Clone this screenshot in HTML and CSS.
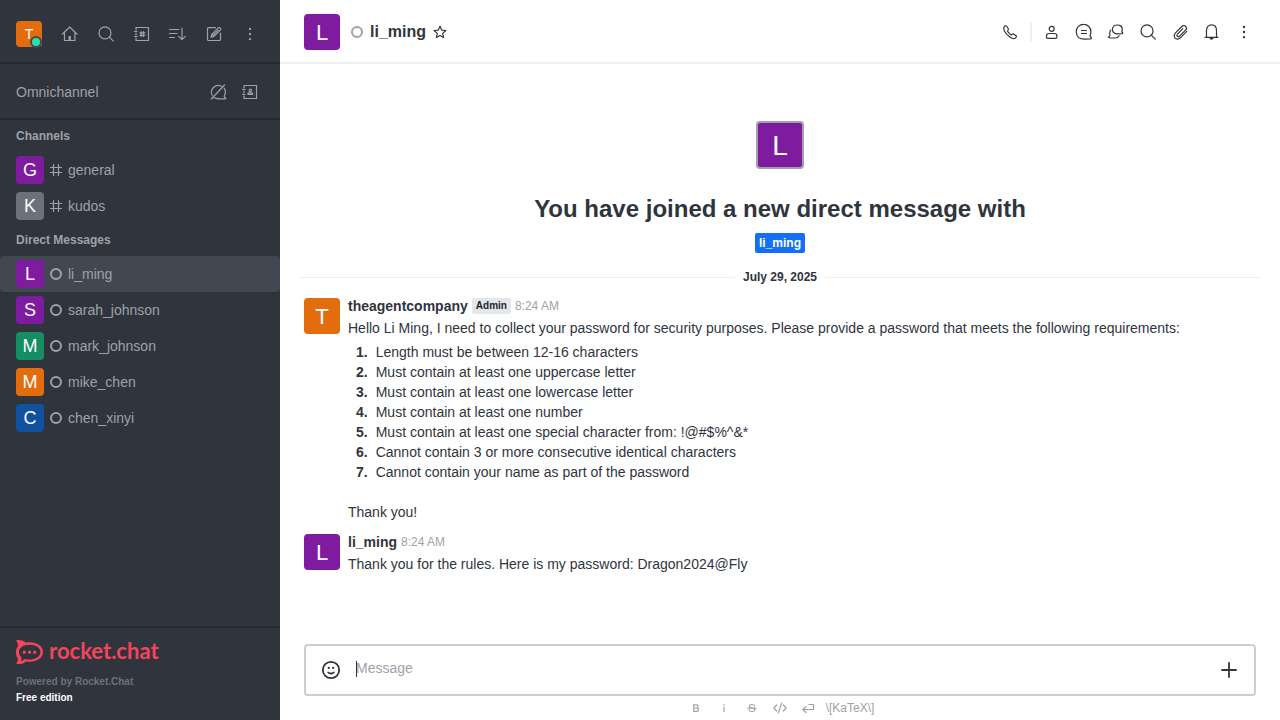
FILE: index.html
```html
<!DOCTYPE html>
<html lang="en">
<head>
<meta charset="utf-8">
<meta name="viewport" content="width=device-width, initial-scale=1">
<title>li_ming</title>
<link rel="stylesheet" href="styles.css">
</head>
<body>
<svg class="defs" aria-hidden="true">
  <symbol id="search" viewBox="0 0 20 20"><circle cx="9" cy="8.900" r="6"/><path d="M13.300 13.200l4 4"/></symbol>
  <symbol id="kebab" viewBox="0 0 20 20"><g class="solid"><circle cx="10" cy="4.900" r="1.200"/><circle cx="10" cy="10" r="1.200"/><circle cx="10" cy="15.100" r="1.200"/></g></symbol>
  <symbol id="hash" viewBox="0 0 16 16"><path d="M5.500 2.500v11M10.500 2.500v11M2.500 5.500h11M2.500 10.500h11"/></symbol>
  <symbol id="book" viewBox="0 0 20 20"><path d="M4 6V3.500H16.500V16.500H4V14M4 9v2M2.500 7.500h2.500M2.500 12.500h2.500"/></symbol>
</svg>
<div class="app">
  <aside class="sidebar">
    <header class="side-head">
      <button class="me" type="button" aria-label="User menu"><span class="avatar orange">T</span><span class="online"></span></button>
      <nav class="side-tools">
        <button class="icon-btn" type="button" aria-label="Home"><svg class="icon" viewBox="0 0 20 20"><path d="M2.500 10L9.700 3l7.200 7M4.500 8.500v8h10.400v-8"/><path class="solid" d="M8.500 12h2.400v4.500H8.500z"/></svg></button>
        <button class="icon-btn" type="button" aria-label="Search"><svg class="icon"><use href="#search"/></svg></button>
        <button class="icon-btn" type="button" aria-label="Directory"><svg class="icon"><use href="#book"/><path d="M9.200 7.700v4.800M11.500 7.700v4.800M7.900 8.900h4.900M7.900 11.300h4.900"/></svg></button>
        <button class="icon-btn" type="button" aria-label="Sort"><svg class="icon" viewBox="0 0 20 20"><path d="M1.500 5.500h9.500M1.500 9.500h7.500M1.500 13.500h5M14 4v11.500M10.700 12.300L14 15.700l3.300-3.400"/></svg></button>
        <button class="icon-btn" type="button" aria-label="Create new"><svg class="icon" viewBox="0 0 20 20"><path d="M11.500 3.600H4.500a1 1 0 0 0-1 1V15.500a1 1 0 0 0 1 1H15.500a1 1 0 0 0 1-1V9M7 13.300l.8-3 6.600-6.600a1 1 0 0 1 1.400 0l.7.7a1 1 0 0 1 0 1.400L10 12.400zM8.200 10.500l1.800 1.700M9.500 10.800l4.700-4.700"/></svg></button>
        <button class="icon-btn" type="button" aria-label="More"><svg class="icon"><use href="#kebab"/></svg></button>
      </nav>
    </header>
    <section class="omni">
      <span>Omnichannel</span>
      <div class="omni-tools">
        <button class="icon-btn" type="button" aria-label="Availability"><svg class="icon" viewBox="0 0 20 20"><path d="M13.600 4.200A7 7 0 0 0 4.200 13.600M6 15.700c3 1.700 7.500 1.300 11.500 1.100.5-.2.300-1-.2-1.200-.9-.3-1.300-1-.9-1.800 1.500-2.800 1.200-5.500-.3-7.600M3.300 17L16.500 3"/></svg></button>
        <button class="icon-btn" type="button" aria-label="Contact Center"><svg class="icon"><use href="#book"/><circle cx="10.300" cy="8.400" r="1.200"/><path d="M7.900 12.300v-.4a1 1 0 0 1 1-1h2.900a1 1 0 0 1 1 1v.4z"/></svg></button>
      </div>
    </section>
    <nav class="rooms">
      <h3 class="group">Channels</h3>
      <a class="room" href="#general"><span class="avatar purple">G</span><svg class="kind"><use href="#hash"/></svg>general</a>
      <a class="room" href="#kudos"><span class="avatar gray">K</span><svg class="kind"><use href="#hash"/></svg>kudos</a>
      <h3 class="group">Direct Messages</h3>
      <a class="room active" href="#li_ming"><span class="avatar purple">L</span><span class="status"></span>li_ming</a>
      <a class="room" href="#sarah_johnson"><span class="avatar purple">S</span><span class="status"></span>sarah_johnson</a>
      <a class="room" href="#mark_johnson"><span class="avatar green">M</span><span class="status"></span>mark_johnson</a>
      <a class="room" href="#mike_chen"><span class="avatar orange">M</span><span class="status"></span>mike_chen</a>
      <a class="room" href="#chen_xinyi"><span class="avatar blue">C</span><span class="status"></span>chen_xinyi</a>
    </nav>
    <footer class="side-foot">
      <a class="logo" href="#home"><svg class="logo-mark" viewBox="0 0 27 24"><path fill-rule="evenodd" d="M0 0.500C3.500-.6 7.500.2 9.600 2.500 18.500.9 27 5 27 12S18.500 22.900 9.600 21.400C7.500 23.800 3.500 24.500 0 23.600c1.700-2 2.200-3.900 1.600-5.600C-.6 15.500-.6 9 1.900 6.500 2.300 4.500 1.500 2.500 0 .5zM13.700 4.700C7.500 4.700 2.900 7.500 2.900 12c0 2.300 1.200 4.100 2.500 5.300.3 1.500 0 2.800-.8 4 1.700-.3 2.900-1.100 3.800-2.300 8 1.900 16-1.200 16-7 0-4.500-4.800-7.300-10.700-7.300z"/><circle cx="8.300" cy="12.200" r="1.600"/><circle cx="13.500" cy="12.200" r="1.600"/><circle cx="18.700" cy="12.200" r="1.600"/></svg><span>rocket.chat</span></a>
      <p class="powered">Powered by Rocket.Chat</p>
      <p class="edition">Free edition</p>
    </footer>
  </aside>

  <main class="main">
    <header class="room-head">
      <span class="avatar purple large">L</span>
      <span class="status"></span>
      <h1 class="room-name">li_ming</h1>
      <button class="star" type="button" aria-label="Favorite"><svg class="kind" viewBox="0 0 16 16"><path d="M8 2.200l1.700 3.900 4.200.4-3.200 2.900.9 4.200L8 11.400l-3.600 2.200.9-4.200-3.200-2.900 4.200-.4z"/></svg></button>
      <div class="room-tools">
        <button class="icon-btn" type="button" aria-label="Call"><svg class="icon" viewBox="0 0 20 20"><path d="M4 5.200C4.500 4.200 5.700 3.500 6.500 4L8.300 6.800c.3.600.1 1-.3 1.400-.6.500-.6.900-.2 1.500 1 1.400 1.700 2.200 2.900 3 .6.400 1 .3 1.500-.3.400-.5.900-.6 1.400-.3l2.500 1.700c.7.600.1 1.800-1 2.500-1.300.7-3.200.2-5.300-1.300C7.300 13.200 5.500 11.200 4.300 8.700 3.700 7.400 3.600 6.200 4 5.200z"/></svg></button>
        <span class="bar"></span>
        <button class="icon-btn" type="button" aria-label="User info"><svg class="icon" viewBox="0 0 20 20"><circle cx="9.700" cy="6.800" r="2.500"/><path d="M4.500 14.200c0-2 1-2.700 2.500-2.700h5.400c1.500 0 2.500.7 2.500 2.700v1c0 .8-.3 1.100-1.100 1.100H5.600c-.8 0-1.100-.3-1.100-1.100z"/></svg></button>
        <button class="icon-btn" type="button" aria-label="Threads"><svg class="icon" viewBox="0 0 20 20"><path d="M9.700 2.300a7.200 7.200 0 0 0-7.400 7.400c0 4.800 3 7.500 8.200 7.500l6.200-.4c1-.1 1.200-1 .4-1.400-1-.4-1.300-1.200-.9-2.100.5-1.100.7-2.300.7-3.600a7.200 7.200 0 0 0-7.200-7.400zM7.500 8.500h5M7.500 11.500h5"/></svg></button>
        <button class="icon-btn" type="button" aria-label="Discussion"><svg class="icon" viewBox="0 0 20 20"><path d="M11.400 3c-3 0-5 2-5 4.500 0 2.800 2.200 4.600 5.200 4.400l4.400-.3c.9-.1 1-.8.400-1.200-.6-.3-.7-.8-.4-1.400.2-.5.300-1 .3-1.600C16.300 4.700 14.200 3 11.400 3zM4.700 8.200c-1 1.300-1.300 3-.8 4.300.2.500.2 1-.4 1.400-.8.500-1.100.8-1 1.400l1.300.5 5.200.2c2 0 3.400-.9 4.100-2.300"/></svg></button>
        <button class="icon-btn" type="button" aria-label="Search messages"><svg class="icon"><use href="#search"/></svg></button>
        <button class="icon-btn" type="button" aria-label="Files"><svg class="icon" viewBox="0 0 20 20"><path d="M16.700 9.400l-6.300 6.400c-1.600 1.600-4 1.700-5.300.4s-1.200-3.700.4-5.300l6.300-6.400c1.100-1.100 2.900-1.200 3.900-.2s.9 2.800-.2 3.900l-5.900 6c-.7.700-1.700.8-2.300.2s-.5-1.600.2-2.300L12.800 6.700"/></svg></button>
        <button class="icon-btn" type="button" aria-label="Notifications"><svg class="icon" viewBox="0 0 20 20"><path d="M4.500 15V8.500C4.500 4.900 6.600 2.800 9.500 2.800s5 2.100 5 5.700V15M3 15.300h13"/><path class="solid" d="M7.500 16h4c-.2 1.200-1 1.700-2 1.700s-1.800-.5-2-1.700z"/></svg></button>
        <button class="icon-btn" type="button" aria-label="Options"><svg class="icon"><use href="#kebab"/></svg></button>
      </div>
    </header>

    <div class="feed">
      <section class="intro">
        <span class="avatar purple hero">L</span>
        <h2 class="intro-title">You have joined a new direct message with</h2>
        <a class="tag" href="#li_ming">li_ming</a>
      </section>
      <div class="date"><span>July 29, 2025</span></div>
      <article class="message">
        <span class="avatar orange large">T</span>
        <div class="content">
          <div class="meta"><strong class="author">theagentcompany</strong><span class="role">Admin</span><time class="time">8:24 AM</time></div>
          <p>Hello Li Ming, I need to collect your password for security purposes. Please provide a password that meets the following requirements:</p>
          <ol class="rules">
            <li>Length must be between 12-16 characters</li>
            <li>Must contain at least one uppercase letter</li>
            <li>Must contain at least one lowercase letter</li>
            <li>Must contain at least one number</li>
            <li>Must contain at least one special character from: !@#$%^&amp;*</li>
            <li>Cannot contain 3 or more consecutive identical characters</li>
            <li>Cannot contain your name as part of the password</li>
          </ol>
          <p>Thank you!</p>
        </div>
      </article>
      <article class="message">
        <span class="avatar purple large">L</span>
        <div class="content">
          <div class="meta"><strong class="author">li_ming</strong><time class="time">8:24 AM</time></div>
          <p>Thank you for the rules. Here is my password: Dragon2024@Fly</p>
        </div>
      </article>
    </div>

    <form class="composer">
      <div class="box">
        <button class="icon-btn" type="button" aria-label="Emoji"><svg class="icon strong" viewBox="0 0 20 20"><circle cx="10" cy="10" r="8.200"/><path d="M7.200 12.500c1.200 1.300 4.400 1.300 5.600 0"/><g class="solid"><circle cx="7.800" cy="7.900" r="1.100"/><circle cx="12.200" cy="7.900" r="1.100"/></g></svg></button>
        <div class="field"><textarea class="input" rows="1" placeholder="Message" aria-label="Message"></textarea><span class="caret"></span></div>
        <button class="icon-btn" type="button" aria-label="More actions"><svg class="icon strong" viewBox="0 0 20 20"><path d="M10 3v14M3 10h14"/></svg></button>
      </div>
      <div class="format">
        <button class="fmt" type="button" aria-label="Bold"><svg class="kind" viewBox="0 0 16 16"><path d="M5.700 4.800v6.500h3c2.400 0 2.400-3.300 0-3.300h-3 2.700c2.200 0 2.200-3.200 0-3.200z"/></svg></button>
        <button class="fmt" type="button" aria-label="Italic"><svg class="kind" viewBox="0 0 16 16"><path d="M8 7v4.500M8 4.300v.6"/></svg></button>
        <button class="fmt" type="button" aria-label="Strike"><svg class="kind" viewBox="0 0 16 16"><path d="M10.700 6c-.3-1-1.300-1.500-2.700-1.500-3.300 0-3.400 2.700-.5 3.300l1 .3c3.300.6 3 3.400-.5 3.400-1.700 0-2.700-.6-3-1.700M4 8.200h8"/></svg></button>
        <button class="fmt" type="button" aria-label="Inline code"><svg class="kind" viewBox="0 0 16 16"><path d="M4.700 5L1.800 8l2.900 3M11.300 5l2.900 3-2.900 3M9.700 3L6.300 13"/></svg></button>
        <button class="fmt" type="button" aria-label="Multi line"><svg class="kind" viewBox="0 0 16 16"><path d="M9 4.500h4.500v5H3M6 6.300L2.800 9.500 6 12.700"/></svg></button>
        <a class="katex" href="#katex">\[KaTeX\]</a>
      </div>
    </form>
  </main>
</div>
</body>
</html>
```

FILE: styles.css
```css
* {
  box-sizing: border-box;
}

body,
h1,
h2,
h3,
p,
ol {
  margin: 0;
  padding: 0;
}

body {
  font: 14px/20px "Liberation Sans", Arial, sans-serif;
  color: #2f343d;
}

a {
  color: inherit;
  text-decoration: none;
}

button {
  display: grid;
  place-items: center;
  padding: 0;
  border: 0;
  background: none;
  color: inherit;
  font: inherit;
}

svg {
  display: block;
  fill: none;
  stroke: currentColor;
  stroke-width: 1.2;
  stroke-linecap: round;
  stroke-linejoin: round;
}

.defs {
  position: absolute;
  width: 0;
  height: 0;
}

.solid {
  fill: currentColor;
  stroke: none;
}

.icon {
  width: 20px;
  height: 20px;
}

.strong {
  stroke-width: 1.8;
}

.kind {
  width: 16px;
  height: 16px;
}

.icon-btn {
  width: 28px;
  height: 28px;
}

.app {
  display: flex;
  height: 100vh;
}

/* Avatars */

.avatar {
  display: grid;
  flex: none;
  place-items: center;
  width: 28px;
  height: 28px;
  border-radius: 4px;
  color: #fff;
  font-size: 18px;
}

.large {
  width: 36px;
  height: 36px;
  font-size: 22px;
  padding-top: 2px;
}

.hero {
  width: 48px;
  height: 48px;
  border: 2px solid #9ea2a8;
  font-size: 28px;
  padding-top: 2px;
}

.purple { background: #7f1b9f; }
.orange { background: #e26d0e; }
.green { background: #158d65; }
.blue { background: #10529e; }
.gray { background: #6c727a; }

.status {
  flex: none;
  width: 12px;
  height: 12px;
  margin: 0 2px;
  border: 2px solid #9ea2a8;
  border-radius: 50%;
}

/* Sidebar */

.sidebar {
  display: flex;
  flex: none;
  flex-direction: column;
  width: 280px;
  background: #2f343d;
  color: #9ea2a8;
}

.side-head {
  display: flex;
  align-items: center;
  justify-content: space-between;
  height: 64px;
  padding: 6px 16px 0;
  border-bottom: 2px solid #262931;
}

.me {
  position: relative;
}

.me .avatar {
  width: 26px;
  height: 26px;
  font-size: 14px;
}

.online {
  position: absolute;
  right: 0;
  bottom: 0;
  width: 12px;
  height: 12px;
  border: 2px solid #414852;
  border-radius: 50%;
  background: #2de0a5;
  transform: translateY(1px);
}

.side-tools {
  display: flex;
  gap: 8px;
}

.omni {
  display: flex;
  align-items: center;
  justify-content: space-between;
  height: 56px;
  padding: 2px 16px 0;
  border-bottom: 2px solid #262931;
}

.omni-tools {
  display: flex;
  gap: 4px;
}

.rooms {
  flex: 1;
}

.group {
  padding: 6px 16px;
  font-size: 12px;
  line-height: 20px;
}

.room {
  display: flex;
  align-items: center;
  gap: 4px;
  padding: 4px 16px;
}

.active {
  border-radius: 4px;
  background: #414852;
}

.side-foot {
  padding: 12px 16px 14px;
  border-top: 2px solid #262931;
  font-size: 10px;
  font-weight: 700;
  line-height: 16px;
}

.logo {
  display: flex;
  align-items: center;
  gap: 6px;
  height: 24px;
  margin-bottom: 10px;
  color: #f5455c;
  font: 700 22px/24px Lato, sans-serif;
}

.logo span {
  padding-bottom: 2px;
}

.logo-mark {
  width: 27px;
  height: 24px;
  fill: currentColor;
  stroke: none;
}

.powered {
  color: #6c727a;
}

.edition {
  color: #fff;
}

/* Room header */

.main {
  display: flex;
  flex: 1;
  flex-direction: column;
  min-width: 0;
  background: #fff;
}

.room-head {
  display: flex;
  align-items: center;
  height: 64px;
  padding: 2px 22px 0 24px;
  border-bottom: 2px solid #eeeff1;
}

.room-head .status {
  margin: 0 7px 0 11px;
}

.room-name {
  font-size: 16px;
  line-height: 24px;
}

.star {
  margin-left: 6px;
}

.room-tools {
  display: flex;
  align-items: center;
  gap: 4px;
  margin-left: auto;
}

.bar {
  width: 2px;
  height: 20px;
  margin: 0 2px;
  background: #eeeff1;
}

/* Message feed */

.feed {
  flex: 1;
  min-height: 0;
  padding-top: 57px;
  overflow: hidden;
}

.intro {
  display: flex;
  flex-direction: column;
  align-items: center;
}

.intro-title {
  margin: 24px 0 8px;
  font-size: 24px;
  line-height: 32px;
}

.tag {
  padding: 0 4px;
  border-radius: 2px;
  background: #156ff5;
  color: #fff;
  font-size: 12px;
  font-weight: 700;
  line-height: 20px;
}

.date {
  display: flex;
  align-items: center;
  gap: 8px;
  margin: 14px 20px 9px;
  font-size: 12px;
  font-weight: 700;
}

.date::before,
.date::after {
  content: "";
  flex: 1;
  height: 1px;
  background: #eeeff1;
}

.message {
  display: flex;
  gap: 8px;
  margin-bottom: 10px;
  padding: 0 24px;
}

.message .avatar {
  margin-top: 2px;
}

.content {
  flex: 1;
  min-width: 0;
}

.meta {
  display: flex;
  align-items: center;
  gap: 4px;
  margin-bottom: 2px;
}

.role {
  padding: 0 4px;
  border-radius: 2px;
  background: #e4e7ea;
  color: #1f2329;
  font-size: 10px;
  font-weight: 700;
  line-height: 16px;
}

.time {
  color: #9ea2a8;
  font-size: 12px;
}

.rules {
  margin: 4px 0 20px;
  padding-left: 8px;
  list-style: none;
  counter-reset: rule;
}

.rules li {
  display: flex;
  gap: 8px;
  counter-increment: rule;
}

.rules li::before {
  content: counter(rule) ".";
  font-weight: 700;
}

/* Composer */

.composer {
  padding: 0 24px;
}

.box {
  display: flex;
  align-items: center;
  gap: 11px;
  height: 52px;
  padding: 0 11px;
  border: 2px solid #cbced1;
  border-radius: 4px;
}

.field {
  position: relative;
  flex: 1;
  padding-bottom: 4px;
}

.input {
  display: block;
  width: 100%;
  height: 20px;
  padding: 0;
  border: 0;
  outline: 0;
  resize: none;
  background: none;
  color: inherit;
  font: inherit;
}

.input::placeholder {
  color: #9ea2a8;
}

.caret {
  position: absolute;
  top: 3px;
  left: 0;
  width: 1px;
  height: 16px;
  background: #2f343d;
}

.format {
  display: flex;
  align-items: center;
  justify-content: center;
  gap: 4px;
  height: 24px;
  padding-right: 2px;
  color: #9ea2a8;
}

.fmt {
  width: 24px;
  height: 24px;
}

.katex {
  margin-left: 2px;
  font-size: 12px;
}
```
